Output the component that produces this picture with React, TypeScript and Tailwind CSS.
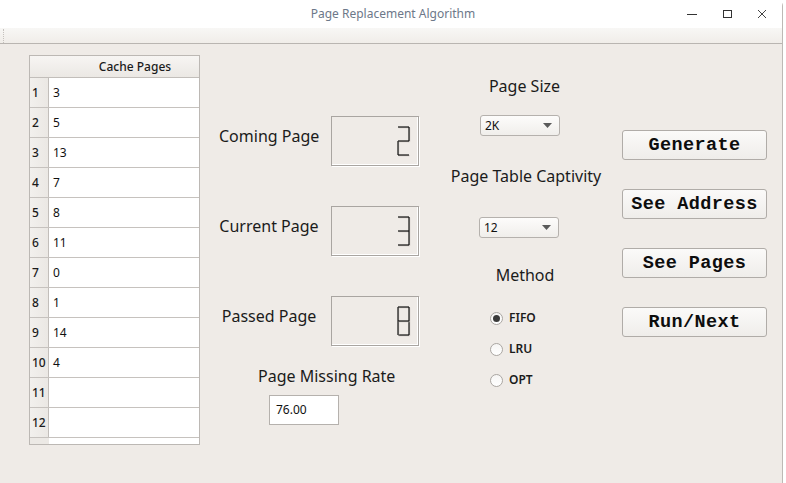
import React from 'react';

const pages = ['3', '5', '13', '7', '8', '11', '0', '1', '14', '4', '', ''];

// segments: a top, b upper-right, c lower-right, d bottom, e lower-left, f upper-left, g middle
const digitSegments: Record<string, string> = {
  '2': 'abged',
  '3': 'abgcd',
  '8': 'abcdefg',
};

function LcdDigit({ d }: { d: string }) {
  const on = digitSegments[d] ?? '';
  const L = 1, R = 12, T = 1, M = 15, B = 29;
  const seg: Record<string, [number, number, number, number]> = {
    a: [L, T, R, T],
    b: [R, T, R, M],
    c: [R, M, R, B],
    d: [L, B, R, B],
    e: [L, M, L, B],
    f: [L, T, L, M],
    g: [L, M, R, M],
  };
  return (
    <svg width="14" height="31" viewBox="0 0 14 31">
      {on.split('').map((k) => {
        const [x1, y1, x2, y2] = seg[k];
        return (
          <g key={k}>
            <line x1={x1 + 0.7} y1={y1 + 0.7} x2={x2 + 0.7} y2={y2 + 0.7} stroke="#c4c0bc" strokeWidth="1" />
            <line x1={x1} y1={y1} x2={x2} y2={y2} stroke="#111" strokeWidth="1.2" />
          </g>
        );
      })}
    </svg>
  );
}

function LcdRow({ label, digit }: { label: string; digit: string }) {
  return (
    <div className="flex items-center">
      <div className="w-[100px] ml-[9px] mb-[10px] text-center text-[16px] text-[#1b1b1b] leading-none whitespace-nowrap">{label}</div>
      <div className="ml-[12px] w-[88px] h-[50px] border border-[#a9a5a1] shadow-[inset_-1px_-1px_0_#ffffff,1px_1px_0_#ffffff] flex items-center justify-end pr-[7px]">
        <LcdDigit d={digit} />
      </div>
    </div>
  );
}

function Combo({ value, width }: { value: string; width: string }) {
  return (
    <div
      className={`${width} h-[21px] rounded-[3px] border border-[#b5b1ad] bg-gradient-to-b from-[#fdfcfb] to-[#f0eeeb] flex items-center justify-between pl-[4px] pr-[7px] text-[12px] text-[#111]`}
    >
      <span>{value}</span>
      <svg width="9" height="5" viewBox="0 0 9 5">
        <path d="M0 0 L9 0 L4.5 5 Z" fill="#5a5a5a" />
      </svg>
    </div>
  );
}

function Radio({ label, checked }: { label: string; checked?: boolean }) {
  return (
    <div className="flex items-center h-[14px]">
      <div className="w-[13px] h-[13px] rounded-full border border-[#aaa6a2] bg-gradient-to-b from-[#f6f5f4] to-white flex items-center justify-center">
        {checked && <div className="w-[7px] h-[7px] rounded-full bg-[#3a3a3a]" />}
      </div>
      <span className="ml-[6px] text-[12px] font-semibold text-[#1b1b1b]">{label}</span>
    </div>
  );
}

function Btn({ label }: { label: string }) {
  return (
    <div
      className="w-[145px] h-[30px] rounded-[3px] border border-[#b0aca8] bg-gradient-to-b from-[#fbfaf9] to-[#efedea] flex items-center justify-center pt-[2px] text-[18.5px] font-bold text-[#0d0d0d] tracking-[0.4px]"
      style={{ fontFamily: '"Liberation Mono", "Courier New", monospace' }}
    >
      {label}
    </div>
  );
}

export default function App() {
  return (
    <div
      className="w-[786px] h-[483px] bg-white overflow-hidden"
      style={{ fontFamily: '"Noto Sans", "Open Sans", sans-serif' }}
    >
      <div className="w-[783px] h-[483px] border-r border-[#bdb9b5] rounded-tr-[6px] flex flex-col bg-[#efebe7]">
        {/* title bar */}
        <div className="h-[28px] bg-white flex items-center relative">
          <div className="flex-1 text-center text-[12px] text-[#6d7889] pl-[4px]">Page Replacement Algorithm</div>
          <div className="absolute right-[14px] top-0 h-[28px] flex items-center gap-[23px]">
            <svg width="12" height="12" viewBox="0 0 12 12">
              <line x1="1" y1="6.5" x2="11" y2="6.5" stroke="#333" strokeWidth="1" />
            </svg>
            <svg width="12" height="12" viewBox="0 0 12 12">
              <rect x="2.5" y="2.5" width="8" height="7" fill="none" stroke="#333" strokeWidth="1" />
            </svg>
            <svg width="12" height="12" viewBox="0 0 12 12">
              <path d="M2 2 L10 10 M10 2 L2 10" stroke="#444" strokeWidth="1" />
            </svg>
          </div>
        </div>
        {/* toolbar strip */}
        <div className="h-[16px] bg-gradient-to-b from-[#f8f7f5] to-[#f0ede9] border-b border-[#b9b5b1] flex items-center pl-[3px]">
          <div className="w-[3px] h-[14px] border-l border-dotted border-[#c5c1bd]" />
        </div>

        {/* content */}
        <div className="flex flex-1">
          {/* table */}
          <div className="ml-[29px] mt-[11px] w-[171px] h-[390px] border border-[#bcb8b4] bg-white flex flex-col">
            <div className="flex h-[22px] border-b border-[#c2beba] bg-gradient-to-b from-[#f7f5f3] to-[#ebe8e4]">
              <div className="w-[19px]" />
              <div className="flex-1 text-center text-[12px] font-medium text-[#1b1b1b] leading-[22px] pl-[22px]">Cache Pages</div>
            </div>
            {pages.map((p, i) => (
              <div key={i} className="flex h-[30px] border-b border-[#c6c2be]">
                <div className="w-[19px] bg-gradient-to-r from-[#f2f0ed] to-[#ebe8e4] border-r border-[#c2beba] text-[12px] font-medium text-[#1b1b1b] flex items-center pl-[2px]">
                  {i + 1}
                </div>
                <div className="flex-1 text-[12px] text-[#111] flex items-center pl-[4px]">{p}</div>
              </div>
            ))}
            <div className="flex flex-1">
              <div className="w-[19px] bg-[#ece9e5]" />
            </div>
          </div>

          {/* lcd column */}
          <div className="w-[220px] ml-[10px] flex flex-col">
            <div className="mt-[72px] flex flex-col gap-[40px]">
              <LcdRow label="Coming Page" digit="2" />
              <LcdRow label="Current Page" digit="3" />
              <LcdRow label="Passed Page" digit="8" />
            </div>
            <div className="mt-[19px] ml-[48px] w-[132px] text-center text-[16px] text-[#1b1b1b] leading-[22px] whitespace-nowrap">Page Missing Rate</div>
            <div className="mt-[8px] ml-[59px] w-[70px] h-[30px] bg-white border border-[#b5b1ad] text-[12px] text-[#111] flex items-center pl-[6px]">
              76.00
            </div>
          </div>

          {/* options column */}
          <div className="w-[190px] flex flex-col items-center">
            <div className="mt-[31px] text-[16px] text-[#1b1b1b] leading-[22px] -ml-[1px]">Page Size</div>
            <div className="mt-[18px] -ml-[10px]">
              <Combo value="2K" width="w-[80px]" />
            </div>
            <div className="mt-[29px] text-[16px] text-[#1b1b1b] leading-[22px] -mr-[2px] whitespace-nowrap">Page Table Captivity</div>
            <div className="mt-[30px] -ml-[12px]">
              <Combo value="12" width="w-[80px]" />
            </div>
            <div className="mt-[26px] text-[16px] text-[#1b1b1b] leading-[22px]">Method</div>
            <div className="mt-[25px] self-start ml-[60px] flex flex-col gap-[17px]">
              <Radio label="FIFO" checked />
              <Radio label="LRU" />
              <Radio label="OPT" />
            </div>
          </div>

          {/* buttons */}
          <div className="ml-[2px] mt-[86px] flex flex-col gap-[29px]">
            <Btn label="Generate" />
            <Btn label="See Address" />
            <Btn label="See Pages" />
            <Btn label="Run/Next" />
          </div>
        </div>
      </div>
    </div>
  );
}
